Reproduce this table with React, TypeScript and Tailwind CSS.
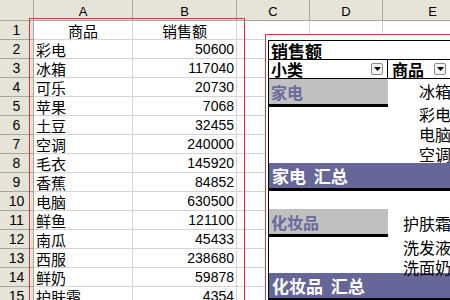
import React from "react";

const rows: [string, string][] = [
  ["彩电", "50600"],
  ["冰箱", "117040"],
  ["可乐", "20730"],
  ["苹果", "7068"],
  ["土豆", "32455"],
  ["空调", "240000"],
  ["毛衣", "145920"],
  ["香蕉", "84852"],
  ["电脑", "630500"],
  ["鲜鱼", "121100"],
  ["南瓜", "45433"],
  ["西服", "238680"],
  ["鲜奶", "59878"],
  ["护肤霜", "4354"],
];

const cjk = { fontFamily: '"Noto Sans CJK SC", sans-serif' };
const num = { fontFamily: '"Liberation Sans", Arial, sans-serif' };

const Dropdown = () => (
  <div className="w-[12px] h-[12px] border border-[#8a8a8a] rounded-[2px] bg-[#f4f4f4] flex items-center justify-center">
    <svg width="7" height="4" viewBox="0 0 7 4">
      <path d="M0 0H7L3.5 4Z" fill="#000" />
    </svg>
  </div>
);

export default function App() {
  return (
    <div className="relative w-[450px] h-[300px] overflow-hidden bg-white text-black">
      {/* sheet grid */}
      <div className="grid grid-cols-[34px_99px_104px_73px_73px_100px]">
        <div className="h-[21px] bg-[#e6e3d8] border-r border-b border-[#a9a79c]" />
        {["A", "B", "C", "D", "E"].map((c) => (
          <div
            key={c}
            className="h-[21px] bg-[#e6e3d8] border-r border-b border-[#a9a79c] flex items-end justify-center pb-[2px] text-[13px] leading-none"
            style={num}
          >
            {c}
          </div>
        ))}

        <div className="h-[19px] bg-[#e6e3d8] border-r border-b border-[#a9a79c] flex items-center justify-center text-[14px]" style={num}>
          1
        </div>
        <div className="h-[19px] border-r border-b border-[#d4d4d4] flex items-center justify-center text-[15px] leading-none" style={cjk}>
          商品
        </div>
        <div className="h-[19px] border-r border-b border-[#d4d4d4] flex items-center justify-center text-[15px] leading-none" style={cjk}>
          销售额
        </div>
        <div className="h-[19px] border-r border-b border-[#d4d4d4]" />
        <div className="h-[19px] border-r border-b border-[#d4d4d4]" />
        <div className="h-[19px] border-r border-b border-[#d4d4d4]" />

        {rows.map(([name, val], i) => (
          <React.Fragment key={i}>
            <div className="h-[19px] bg-[#e6e3d8] border-r border-b border-[#a9a79c] flex items-center justify-center text-[14px]" style={num}>
              {i + 2}
            </div>
            <div className="h-[19px] border-r border-b border-[#d4d4d4] flex items-center pl-[2px] text-[15px] leading-none" style={cjk}>
              {name}
            </div>
            <div className="h-[19px] border-r border-b border-[#d4d4d4] flex items-center justify-end pr-[2px] text-[14px]" style={num}>
              {val}
            </div>
            <div className="h-[19px] border-r border-b border-[#d4d4d4]" />
            <div className="h-[19px] border-r border-b border-[#d4d4d4]" />
            <div className="h-[19px] border-r border-b border-[#d4d4d4]" />
          </React.Fragment>
        ))}
      </div>

      {/* red annotation around A:B */}
      <div className="absolute left-[29px] top-[18px] w-[216px] h-[300px] border border-[#d9363e]" />

      {/* pasted pivot table picture */}
      <div className="absolute left-[265px] top-[34px] w-[200px] h-[280px] border border-[#d9363e] bg-white pl-[2px] pt-[5px]">
        <div className="border-l border-t border-black w-[200px] leading-none" style={cjk}>
          <div className="h-[19px] border-b border-black flex items-center pl-[2px] text-[17px] font-bold">
            销售额
          </div>
          <div className="h-[19px] border-b border-black flex">
            <div className="w-[119px] border-r border-black flex items-center justify-between pl-[2px] pr-[4px] text-[16px] font-bold">
              <span>小类</span>
              <Dropdown />
            </div>
            <div className="flex-1 flex items-center gap-[10px] pl-[4px] text-[16px] font-bold">
              <span>商品</span>
              <Dropdown />
            </div>
          </div>

          {/* 家电 group */}
          <div className="flex h-[84px]">
            <div className="w-[119px]">
              <div className="h-[25px] bg-[#c0c0c0] flex items-center pl-[2px] text-[16px] font-bold text-[#6a6a9c]">
                家电
              </div>
              <div className="h-[3px] bg-black" />
            </div>
            <div className="w-[63px] flex flex-col items-end pt-[4px] gap-[4px] text-[16px]">
              <span>冰箱</span>
              <span className="mt-[3px]">彩电</span>
              <span>电脑</span>
              <span>空调</span>
            </div>
          </div>
          <div className="h-[25px] bg-[#666699] flex items-center pl-[3px] text-[17px] font-bold text-white">
            家电&nbsp;&nbsp;汇总
          </div>
          <div className="h-[3px] bg-black" />
          <div className="h-[18px]" />

          {/* 化妆品 group */}
          <div className="flex h-[64px]">
            <div className="w-[119px]">
              <div className="h-[25px] bg-[#c0c0c0] flex items-center pl-[2px] text-[16px] font-bold text-[#6a6a9c]">
                化妆品
              </div>
              <div className="h-[3px] bg-black" />
            </div>
            <div className="w-[63px] flex flex-col items-end pt-[6px] gap-[4px] text-[16px]">
              <span>护肤霜</span>
              <span className="mt-[4px]">洗发液</span>
              <span>洗面奶</span>
            </div>
          </div>
          <div className="h-[25px] bg-[#666699] flex items-center pl-[3px] text-[17px] font-bold text-white">
            化妆品&nbsp;&nbsp;汇总
          </div>
          <div className="h-[3px] bg-black" />
        </div>
      </div>
    </div>
  );
}
